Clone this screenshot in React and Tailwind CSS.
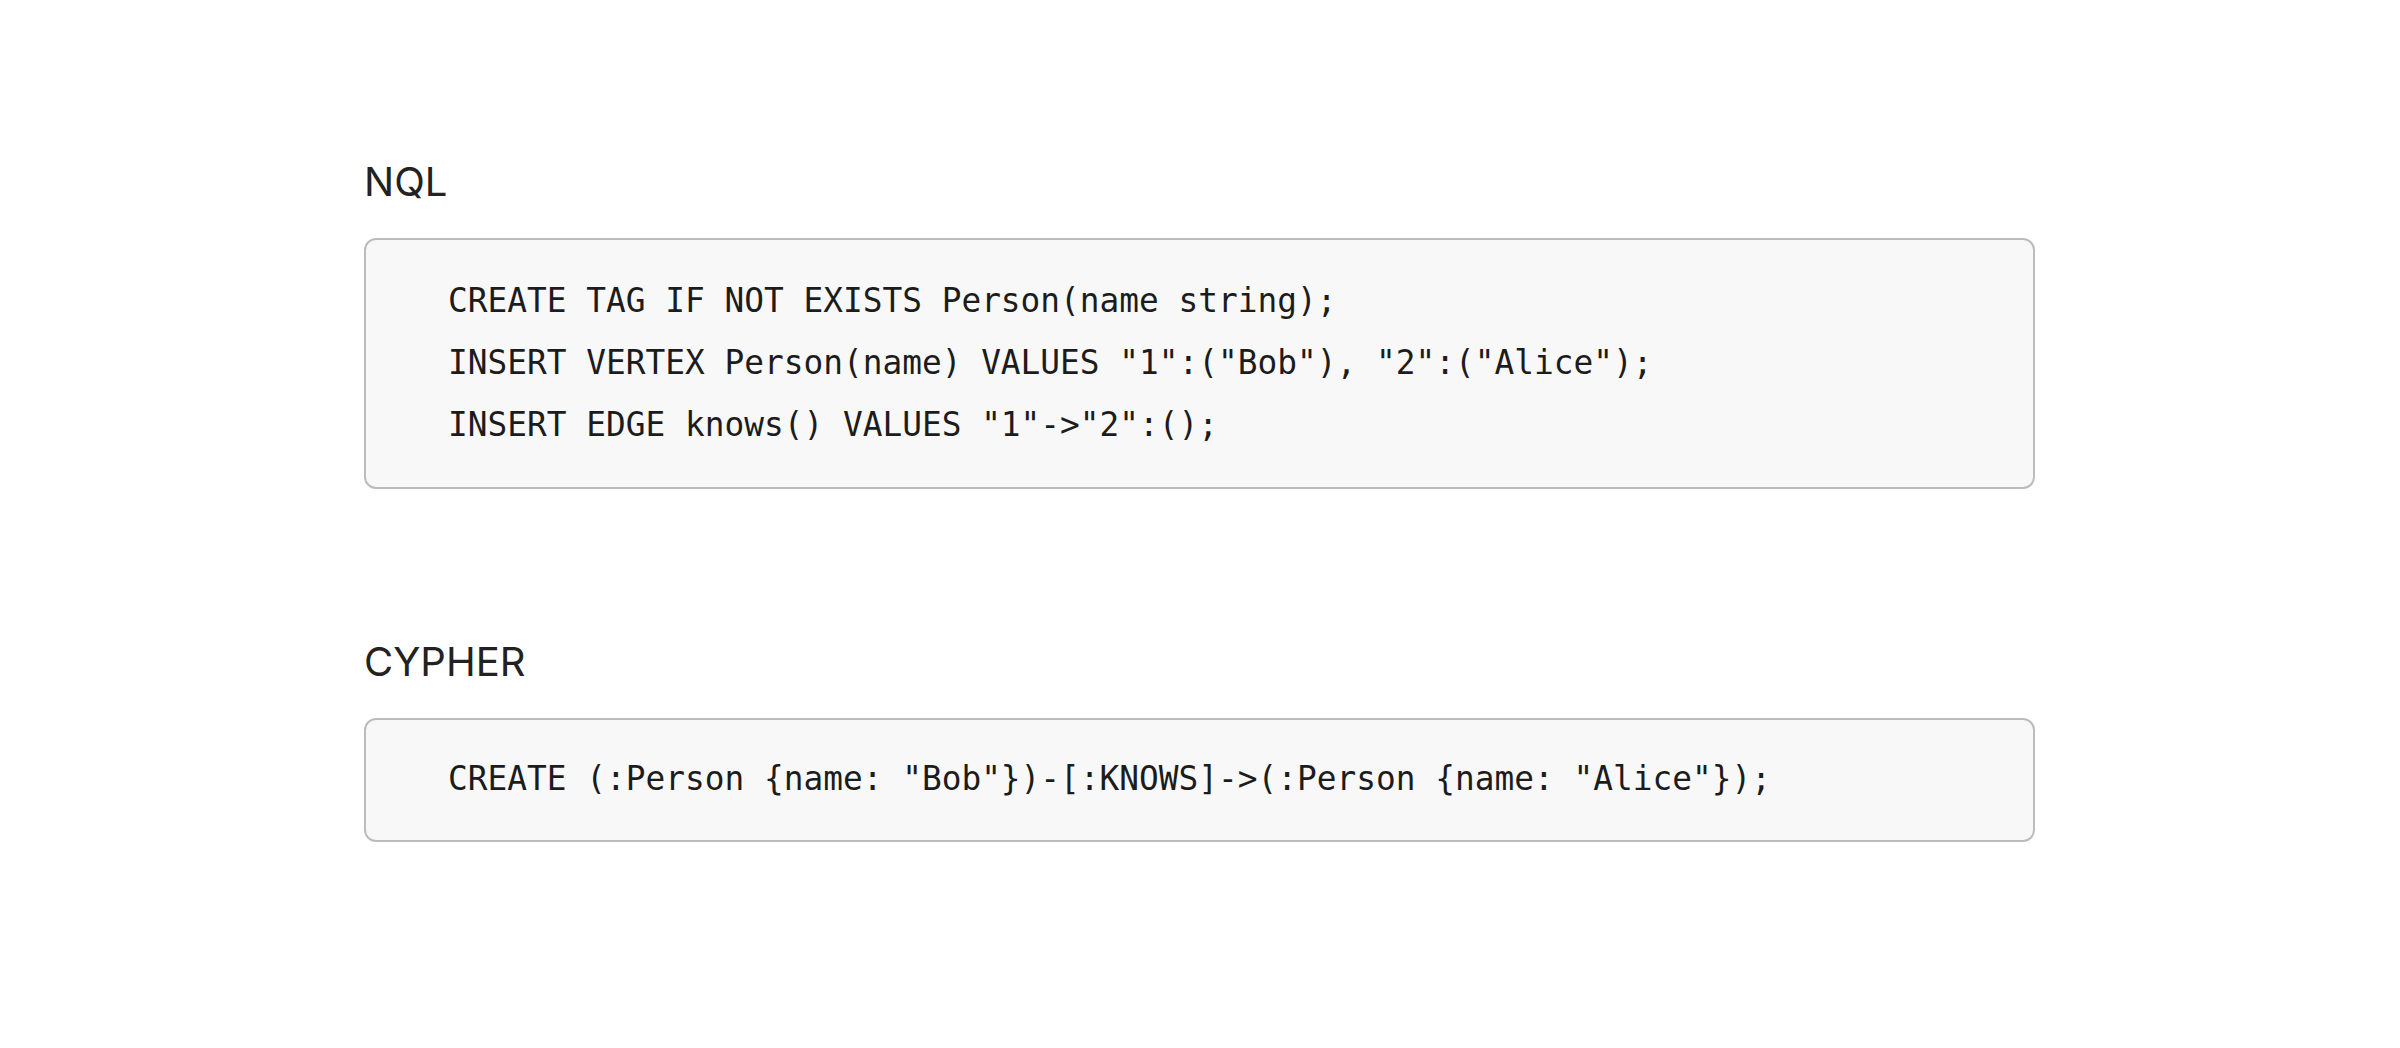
const blocks = [
  {
    title: "NQL",
    lines: [
      'CREATE TAG IF NOT EXISTS Person(name string);',
      'INSERT VERTEX Person(name) VALUES "1":("Bob"), "2":("Alice");',
      'INSERT EDGE knows() VALUES "1"->"2":();',
    ],
  },
  {
    title: "CYPHER",
    lines: ['CREATE (:Person {name: "Bob"})-[:KNOWS]->(:Person {name: "Alice"});'],
  },
];

function CodeBlock({ title, lines, single }) {
  return (
    <section>
      <h2 className="font-['Inter',sans-serif] text-[40px] leading-[48px] font-normal text-[#222222] mb-8">
        {title}
      </h2>
      <div
        className={
          "rounded-xl border-2 border-[#bcbcbc] bg-[#f8f8f8] pl-[82px] pr-[83px] " +
          (single ? "pt-[28px] pb-[30px]" : "pt-[30px] pb-[31px]")
        }
      >
        {lines.map((l, i) => (
          <div
            key={i}
            className="font-['DejaVu_Sans_Mono',monospace] text-[32.8px] leading-[62px] text-[#1c1c1c] whitespace-pre"
          >
            {l}
          </div>
        ))}
      </div>
    </section>
  );
}

export default function App() {
  return (
    <div className="min-h-[1048px] w-full bg-white pt-[158px] pl-[364px]">
      <div className="w-[1671px] flex flex-col gap-[149px]">
        {blocks.map((b, i) => (
          <CodeBlock key={b.title} title={b.title} lines={b.lines} single={i === 1} />
        ))}
      </div>
    </div>
  );
}
